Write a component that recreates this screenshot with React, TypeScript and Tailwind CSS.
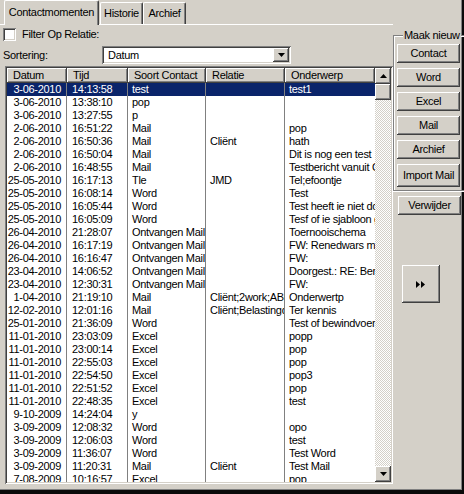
import React from "react";

const raised =
  "shadow-[inset_-1px_-1px_#404040,inset_1px_1px_#ffffff,inset_-2px_-2px_#808080,inset_2px_2px_#d4d0c8]";
const sunken =
  "shadow-[inset_1px_1px_#808080,inset_-1px_-1px_#ffffff,inset_2px_2px_#404040,inset_-2px_-2px_#d4d0c8]";
const dither =
  "bg-[repeating-conic-gradient(#d4d0c8_0_25%,#ffffff_0_50%)] [background-size:2px_2px]";

type Row = [string, string, string, string, string];

const rows: Row[] = [
  ["3-06-2010", "14:13:58", "test", "", "test1"],
  ["3-06-2010", "13:38:10", "pop", "", ""],
  ["3-06-2010", "13:27:55", "p", "", ""],
  ["2-06-2010", "16:51:22", "Mail", "", "pop"],
  ["2-06-2010", "16:50:36", "Mail", "Cliënt", "hath"],
  ["2-06-2010", "16:50:04", "Mail", "", "Dit is nog een test"],
  ["2-06-2010", "16:48:55", "Mail", "", "Testbericht vanuit Outlook"],
  ["25-05-2010", "16:17:13", "Tle", "JMD", "Tel;efoontje"],
  ["25-05-2010", "16:08:14", "Word", "", "Test"],
  ["25-05-2010", "16:05:44", "Word", "", "Test heeft ie niet doorgekomen"],
  ["25-05-2010", "16:05:09", "Word", "", "Tesf of ie sjabloon gebruikt"],
  ["26-04-2010", "21:28:07", "Ontvangen Mail", "", "Toernooischema"],
  ["26-04-2010", "16:17:19", "Ontvangen Mail", "", "FW: Renedwars mail"],
  ["26-04-2010", "16:16:47", "Ontvangen Mail", "", "FW:"],
  ["23-04-2010", "14:06:52", "Ontvangen Mail", "", "Doorgest.: RE: Bericht"],
  ["23-04-2010", "12:30:31", "Ontvangen Mail", "", "FW:"],
  ["1-04-2010", "21:19:10", "Mail", "Cliënt;2work;ABC", "Onderwertp"],
  ["12-02-2010", "12:01:16", "Mail", "Cliënt;Belastingdienst", "Ter kennis"],
  ["25-01-2010", "21:36:09", "Word", "", "Test of bewindvoering"],
  ["11-01-2010", "23:03:09", "Excel", "", "popp"],
  ["11-01-2010", "23:00:14", "Excel", "", "pop"],
  ["11-01-2010", "22:55:03", "Excel", "", "pop"],
  ["11-01-2010", "22:54:50", "Excel", "", "pop3"],
  ["11-01-2010", "22:51:52", "Excel", "", "pop"],
  ["11-01-2010", "22:48:35", "Excel", "", "test"],
  ["9-10-2009", "14:24:04", "y", "", ""],
  ["3-09-2009", "12:08:32", "Word", "", "opo"],
  ["3-09-2009", "12:06:03", "Word", "", "test"],
  ["3-09-2009", "11:36:07", "Word", "", "Test Word"],
  ["3-09-2009", "11:20:31", "Mail", "Cliënt", "Test Mail"],
  ["7-08-2009", "10:16:57", "Excel", "", "pop"],
];

function ArrowUp() {
  return (
    <svg width="7" height="4" viewBox="0 0 7 4">
      <polygon points="3.5,0 7,4 0,4" fill="#000" />
    </svg>
  );
}

function ArrowDown() {
  return (
    <svg width="7" height="4" viewBox="0 0 7 4">
      <polygon points="0,0 7,0 3.5,4" fill="#000" />
    </svg>
  );
}

function Button({ label, className }: { label: string; className: string }) {
  return (
    <button className={`${raised} bg-[#d4d0c8] flex items-center justify-center text-black ${className}`}>
      {label}
    </button>
  );
}

export default function App() {
  const headers = ["Datum", "Tijd", "Soort Contact", "Relatie", "Onderwerp"];

  return (
    <div className="w-[464px] h-[494px] bg-[#d4d0c8] overflow-hidden font-['Liberation_Sans',Arial,sans-serif] text-[11px] tracking-[-0.3px] leading-[13px] text-black shadow-[inset_-2px_-4px_#0a0a0a,inset_-3px_-5px_#808080]">
      <div className="flex h-full">
        {/* tab control */}
        <div className="w-[393px] flex flex-col">
          <div className="h-[25px] flex items-end pl-[4px] border-b border-white">
            <div className="h-[25px] -mb-px w-[95px] bg-[#d4d0c8] border-t border-l border-white border-r border-r-[#404040] rounded-t-[2px] shadow-[inset_-1px_0_#808080] flex items-start justify-center pt-[5px] relative z-10">
              Contactmomenten
            </div>
            <div className="h-[22px] w-[43px] ml-[1px] border-t border-l border-white border-r border-r-[#404040] rounded-t-[2px] shadow-[inset_-1px_0_#808080] flex items-start justify-center pt-[4px]">
              Historie
            </div>
            <div className="h-[22px] w-[43px] border-t border-l border-white border-r border-r-[#404040] rounded-t-[2px] shadow-[inset_-1px_0_#808080] flex items-start justify-center pt-[4px]">
              Archief
            </div>
          </div>

          <div className="flex flex-col pl-[3px] pt-[3px]">
            <div className="flex items-center h-[13px] gap-[6px]">
              <span className={`w-[13px] h-[13px] bg-white ${sunken}`} />
              <span>Filter Op Relatie:</span>
            </div>

            <div className="flex items-center mt-[5px] h-[18px]">
              <span className="w-[99px]">Sortering:</span>
              <div className={`w-[189px] h-[18px] bg-white ${sunken} flex items-center p-[2px]`}>
                <span className="flex-1 pl-[4px]">Datum</span>
                <span className={`w-[16px] h-[14px] bg-[#d4d0c8] ${raised} flex items-center justify-center`}>
                  <ArrowDown />
                </span>
              </div>
            </div>

            {/* list view */}
            <div className={`mt-[2px] ml-[2px] w-[388px] h-[418px] bg-white ${sunken} p-[2px] flex`}>
              <div className="flex-1 flex flex-col overflow-hidden">
                <div className="flex h-[15px] shrink-0">
                  {headers.map((h, i) => (
                    <div
                      key={h}
                      className={`${raised} bg-[#d4d0c8] h-[15px] pl-[6px] flex items-center whitespace-nowrap overflow-hidden ${
                        ["w-[60px]", "w-[61px]", "w-[78px]", "w-[79px]", "flex-1"][i]
                      }`}
                    >
                      {h}
                    </div>
                  ))}
                </div>
                <div className="flex-1 overflow-hidden">
                  {rows.map((r, idx) => {
                    const sel = idx === 0;
                    return (
                      <div
                        key={idx}
                        className={`flex h-[13px] ${sel ? "bg-[#0a246a] text-white" : ""}`}
                      >
                        <div className="w-[60px] shrink-0 border-r border-[#808080] text-right pr-[5px] whitespace-nowrap overflow-hidden">
                          {r[0]}
                        </div>
                        <div className="w-[61px] shrink-0 border-r border-[#808080] pl-[5px] whitespace-nowrap overflow-hidden">
                          {r[1]}
                        </div>
                        <div className="w-[78px] shrink-0 border-r border-[#808080] pl-[4px] whitespace-nowrap overflow-hidden">
                          {r[2]}
                        </div>
                        <div className="w-[79px] shrink-0 border-r border-[#808080] pl-[4px] whitespace-nowrap overflow-hidden">
                          {r[3]}
                        </div>
                        <div className="flex-1 pl-[4px] whitespace-nowrap overflow-hidden">{r[4]}</div>
                      </div>
                    );
                  })}
                </div>
              </div>

              {/* scrollbar */}
              <div className="w-[16px] flex flex-col">
                <div className={`h-[16px] bg-[#d4d0c8] ${raised} flex items-center justify-center`}>
                  <ArrowUp />
                </div>
                <div className={`h-[16px] bg-[#d4d0c8] ${raised}`} />
                <div className={`flex-1 ${dither}`} />
                <div className={`h-[16px] bg-[#d4d0c8] ${raised} flex items-center justify-center`}>
                  <ArrowDown />
                </div>
              </div>
            </div>
          </div>
        </div>

        {/* right panel */}
        <div className="flex-1 flex flex-col">
          <div className="mt-[35px] relative border-t border-l border-b border-[#808080] shadow-[inset_1px_1px_#ffffff,0_1px_#ffffff] pl-[3px] pt-[8px] pb-[3px] flex flex-col gap-[5px]">
            <span className="absolute -top-[7px] left-[9px] bg-[#d4d0c8] px-[1px] whitespace-nowrap">Maak nieuw</span>
            <Button label="Contact" className="w-[63px] h-[19px]" />
            <Button label="Word" className="w-[63px] h-[19px]" />
            <Button label="Excel" className="w-[63px] h-[19px]" />
            <Button label="Mail" className="w-[63px] h-[19px]" />
            <Button label="Archief" className="w-[63px] h-[19px]" />
            <Button label="Import Mail" className="w-[63px] h-[23px] whitespace-nowrap" />
          </div>
          <Button label="Verwijder" className="mt-[5px] ml-[5px] w-[63px] h-[19px]" />
          <button className={`${raised} bg-[#d4d0c8] mt-[50px] ml-[9px] w-[38px] h-[38px] flex items-center justify-center`}>
            <svg width="10" height="7" viewBox="0 0 10 7">
              <polygon points="0,0 4,3.5 0,7" fill="#000" />
              <polygon points="5,0 9,3.5 5,7" fill="#000" />
            </svg>
          </button>
        </div>
      </div>
    </div>
  );
}
